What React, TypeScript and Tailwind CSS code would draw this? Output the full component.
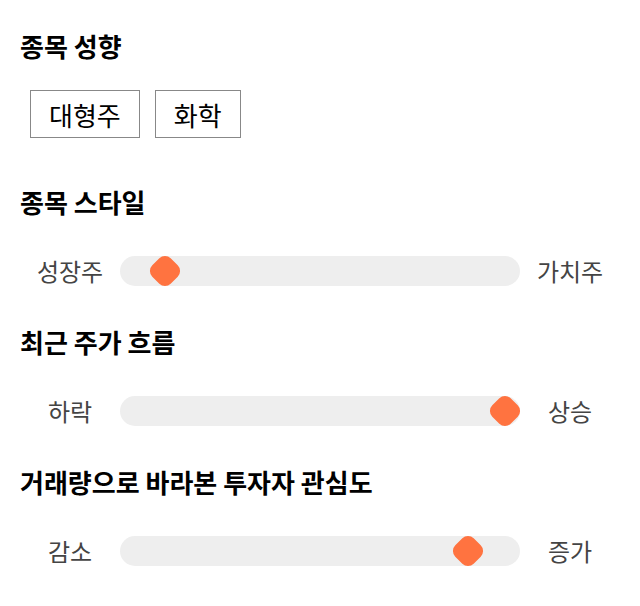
import React from "react";

const font = { fontFamily: '"Noto Sans CJK KR", "Noto Sans", sans-serif' };

function Heading({ children }: { children: React.ReactNode }) {
  return (
    <h2 className="text-[26px] font-bold leading-[36px] text-black">{children}</h2>
  );
}

function Slider({ left, right, pos }: { left: string; right: string; pos: number }) {
  return (
    <div className="flex items-center h-[30px]">
      <div className="w-[100px] text-center text-[24px] leading-[30px] text-[#444]">{left}</div>
      <div className="relative w-[400px] h-[30px] rounded-full bg-[#eeeeee]">
        <div
          className="absolute top-[2px] w-[26px] h-[26px] rounded-[8px] bg-[#ff7340] rotate-45"
          style={{ left: pos - 13 }}
        />
      </div>
      <div className="w-[100px] text-center text-[24px] leading-[30px] text-[#444]">{right}</div>
    </div>
  );
}

export default function App() {
  return (
    <div className="w-[640px] h-[606px] bg-white px-[20px] pt-[28px]" style={font}>
      <Heading>종목 성향</Heading>
      <div className="flex gap-[15px] mt-[26px] ml-[10px]">
        <div className="h-[48px] px-[18px] border border-[#888] flex items-center text-[26px] text-black">대형주</div>
        <div className="h-[48px] px-[18px] border border-[#888] flex items-center text-[26px] text-black">화학</div>
      </div>
      <div className="mt-[46px]">
        <Heading>종목 스타일</Heading>
      </div>
      <div className="mt-[36px]">
        <Slider left="성장주" right="가치주" pos={45} />
      </div>
      <div className="mt-[38px]">
        <Heading>최근 주가 흐름</Heading>
      </div>
      <div className="mt-[36px]">
        <Slider left="하락" right="상승" pos={385} />
      </div>
      <div className="mt-[38px]">
        <Heading>거래량으로 바라본 투자자 관심도</Heading>
      </div>
      <div className="mt-[36px]">
        <Slider left="감소" right="증가" pos={348} />
      </div>
    </div>
  );
}
